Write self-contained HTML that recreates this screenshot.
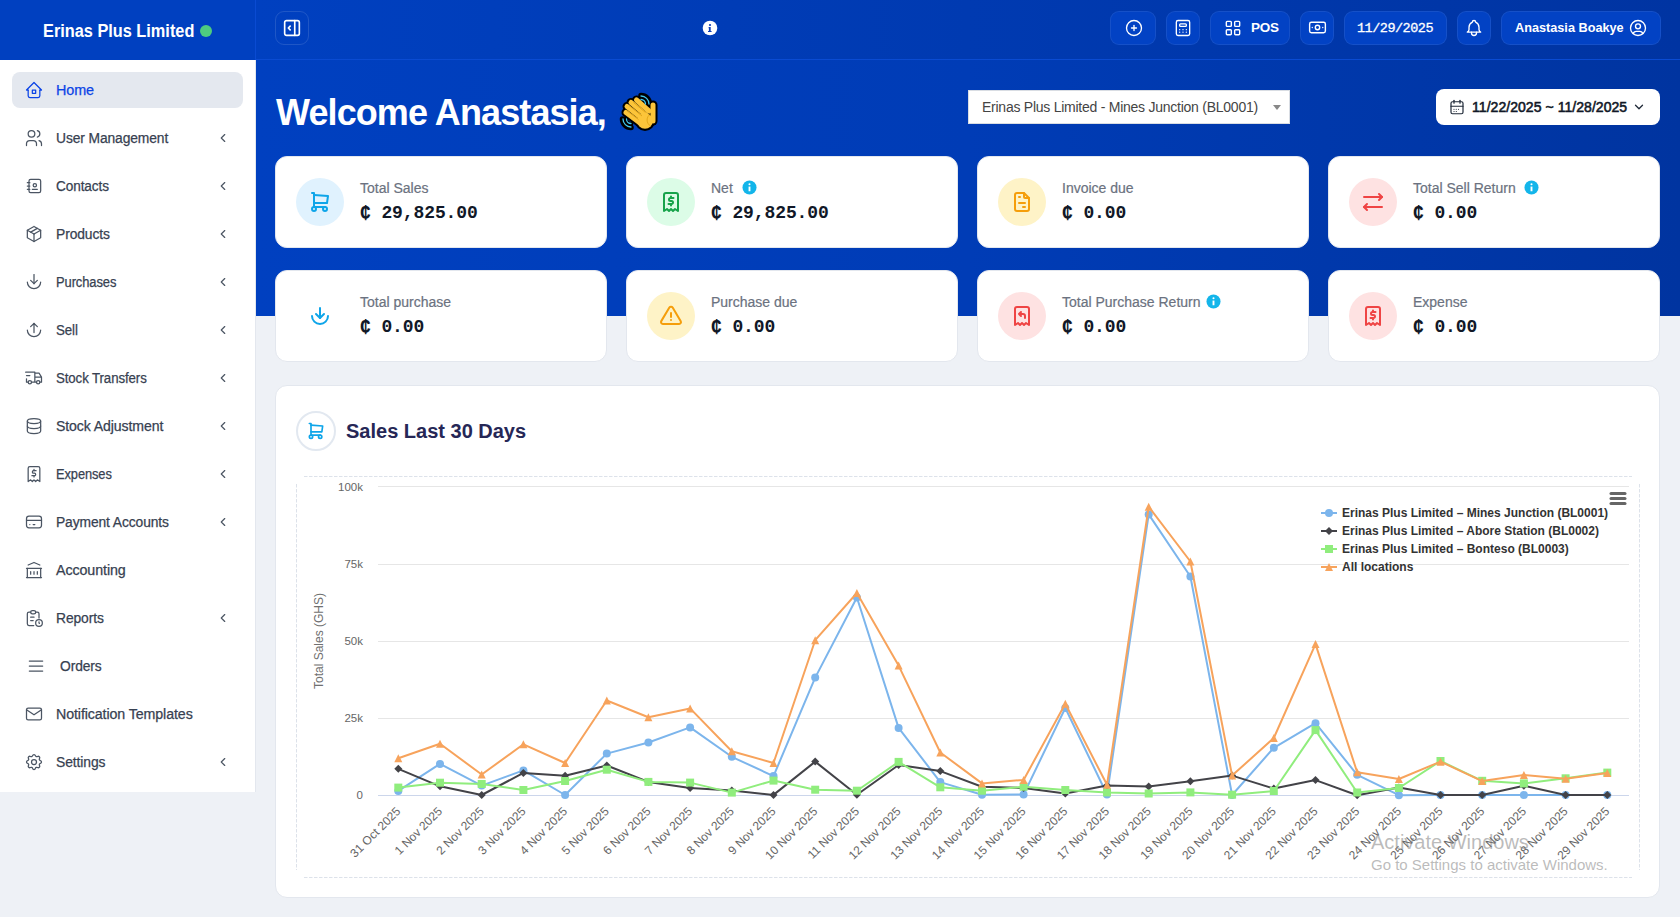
<!DOCTYPE html><html><head><meta charset="utf-8"><style>
*{box-sizing:border-box;margin:0;padding:0}
html,body{width:1680px;height:917px;overflow:hidden}
body{background:#eef1f6;font-family:"Liberation Sans",sans-serif;position:relative;color:#374151}
.a{position:absolute}
svg.i{position:absolute;fill:none;stroke-linecap:round;stroke-linejoin:round}
#sb{left:0;top:0;width:256px;height:792px;background:#fff;border-right:1px solid #e3e7ee}
#brand{left:0;top:0;width:256px;height:60px;background:#0040c0;border-right:1px solid #0a4bd2}
#brand .t{position:absolute;left:43px;top:19px;font-weight:bold;font-size:18px;color:#fff;white-space:nowrap;line-height:24px;transform:scaleX(0.906);transform-origin:0 0}
#brand .dot{position:absolute;left:200px;top:25px;width:12px;height:12px;border-radius:50%;background:#4ecb7f}
.mi{position:absolute;left:12px;width:231px;height:36px;border-radius:8px}
.mi.act{background:#e4e8ef}
.mi svg{position:absolute;left:12px;top:8px;width:20px;height:20px;fill:none;stroke:#4b5563;stroke-width:1.5;stroke-linecap:round;stroke-linejoin:round}
.mi .l{position:absolute;left:44px;top:0;line-height:36px;font-size:14px;color:#374151;white-space:nowrap;letter-spacing:-0.1px;-webkit-text-stroke:0.25px #374151}
.mi.act .l{color:#0b44e6;-webkit-text-stroke:0.25px #0b44e6}
.mi.act svg{stroke:#0b44e6}
.mi svg.ch{left:204px;top:11px;width:14px;height:14px;stroke-width:2}
#top{left:256px;top:0;width:1424px;height:60px;background:linear-gradient(90deg,#0040c0 0%,#0034a2 100%);border-bottom:1px solid #0a4bd2}
#hero{left:256px;top:60px;width:1424px;height:256px;background:linear-gradient(90deg,#0040c0 0%,#003cb6 50%,#0034a0 100%)}
.tb{position:absolute;top:11px;height:34px;border-radius:9px;background:#0242c4;border:1px solid rgba(255,255,255,0.08);color:#fff;font-weight:bold;white-space:nowrap}
.tb svg{position:absolute;fill:none;stroke:#fff;stroke-width:2;stroke-linecap:round;stroke-linejoin:round}
.card{position:absolute;width:332px;height:92px;background:#fff;border-radius:12px;border:1px solid #e3e7ee}
.card .ic{position:absolute;left:20px;top:21px;width:48px;height:48px;border-radius:50%}
.card .ic svg{position:absolute;left:12px;top:12px;width:24px;height:24px;fill:none;stroke-width:2;stroke-linecap:round;stroke-linejoin:round}
.card .lb{position:absolute;left:84px;top:22px;line-height:18px;font-size:14px;color:#6b7280;white-space:nowrap;-webkit-text-stroke:0.2px #6b7280}
.card .lb svg{position:absolute;top:0px;width:16px;height:16px}
.card .v{position:absolute;left:84px;top:43px;line-height:26px;font-family:"Liberation Mono",monospace;font-weight:bold;font-size:18px;color:#111827;white-space:nowrap;letter-spacing:-0.1px}
</style></head><body>
<div id="sb" class="a">
<div class="mi act" style="top:72px"><svg viewBox="0 0 24 24"><path d="M5 12l-2 0l9 -9l9 9l-2 0"/><path d="M5 12v7a2 2 0 0 0 2 2h10a2 2 0 0 0 2 -2v-7"/><path d="M10 12h4v4h-4z"/></svg><span class="l" style="transform:scaleX(1.027);transform-origin:0 0">Home</span>
</div>
<div class="mi" style="top:120px"><svg viewBox="0 0 24 24"><path d="M9 7m-4 0a4 4 0 1 0 8 0a4 4 0 1 0 -8 0"/><path d="M3 21v-2a4 4 0 0 1 4 -4h4a4 4 0 0 1 4 4v2"/><path d="M16 3.13a4 4 0 0 1 0 7.75"/><path d="M21 21v-2a4 4 0 0 0 -3 -3.85"/></svg><span class="l" style="transform:scaleX(0.987);transform-origin:0 0">User Management</span>
<svg class="ch" viewBox="0 0 24 24"><path d="M15 6l-6 6l6 6"/></svg>
</div>
<div class="mi" style="top:168px"><svg viewBox="0 0 24 24"><path d="M20 6v12a2 2 0 0 1 -2 2h-10a2 2 0 0 1 -2 -2v-12a2 2 0 0 1 2 -2h10a2 2 0 0 1 2 2z"/><path d="M10 16h6"/><path d="M13 11m-2 0a2 2 0 1 0 4 0a2 2 0 1 0 -4 0"/><path d="M4 8h3"/><path d="M4 12h3"/><path d="M4 16h3"/></svg><span class="l" style="transform:scaleX(0.972);transform-origin:0 0">Contacts</span>
<svg class="ch" viewBox="0 0 24 24"><path d="M15 6l-6 6l6 6"/></svg>
</div>
<div class="mi" style="top:216px"><svg viewBox="0 0 24 24"><path d="M12 3l8 4.5l0 9l-8 4.5l-8 -4.5l0 -9l8 -4.5"/><path d="M12 12l8 -4.5"/><path d="M12 12l0 9"/><path d="M12 12l-8 -4.5"/><path d="M16 5.25l-8 4.5"/></svg><span class="l" style="transform:scaleX(0.989);transform-origin:0 0">Products</span>
<svg class="ch" viewBox="0 0 24 24"><path d="M15 6l-6 6l6 6"/></svg>
</div>
<div class="mi" style="top:264px"><svg viewBox="0 0 24 24"><path d="M4 12a8 8 0 0 0 16 0"/><path d="M12 3v11"/><path d="M8 10l4 4l4 -4"/></svg><span class="l" style="transform:scaleX(0.925);transform-origin:0 0">Purchases</span>
<svg class="ch" viewBox="0 0 24 24"><path d="M15 6l-6 6l6 6"/></svg>
</div>
<div class="mi" style="top:312px"><svg viewBox="0 0 24 24"><path d="M4 12a8 8 0 0 0 16 0"/><path d="M12 15v-11"/><path d="M8 8l4 -4l4 4"/></svg><span class="l" style="transform:scaleX(0.948);transform-origin:0 0">Sell</span>
<svg class="ch" viewBox="0 0 24 24"><path d="M15 6l-6 6l6 6"/></svg>
</div>
<div class="mi" style="top:360px"><svg viewBox="0 0 24 24"><path d="M7 17m-2 0a2 2 0 1 0 4 0a2 2 0 1 0 -4 0"/><path d="M17 17m-2 0a2 2 0 1 0 4 0a2 2 0 1 0 -4 0"/><path d="M5 17h-2v-4m-1 -8h11v12m-4 0h6m4 0h2v-6h-8m0 -5h5l3 5"/><path d="M3 9l4 0"/></svg><span class="l" style="transform:scaleX(0.947);transform-origin:0 0">Stock Transfers</span>
<svg class="ch" viewBox="0 0 24 24"><path d="M15 6l-6 6l6 6"/></svg>
</div>
<div class="mi" style="top:408px"><svg viewBox="0 0 24 24"><path d="M12 6m-8 0a8 3 0 1 0 16 0a8 3 0 1 0 -16 0"/><path d="M4 6v6a8 3 0 0 0 16 0v-6"/><path d="M4 12v6a8 3 0 0 0 16 0v-6"/></svg><span class="l" style="transform:scaleX(1.006);transform-origin:0 0">Stock Adjustment</span>
<svg class="ch" viewBox="0 0 24 24"><path d="M15 6l-6 6l6 6"/></svg>
</div>
<div class="mi" style="top:456px"><svg viewBox="0 0 24 24"><path d="M5 21v-16a2 2 0 0 1 2 -2h10a2 2 0 0 1 2 2v16l-3 -2l-2 2l-2 -2l-2 2l-2 -2l-3 2"/><path d="M14.5 8h-3a1.5 1.5 0 0 0 0 3h1a1.5 1.5 0 0 1 0 3h-3"/><path d="M12 6.5v1.5m0 6v1.5"/></svg><span class="l" style="transform:scaleX(0.919);transform-origin:0 0">Expenses</span>
<svg class="ch" viewBox="0 0 24 24"><path d="M15 6l-6 6l6 6"/></svg>
</div>
<div class="mi" style="top:504px"><svg viewBox="0 0 24 24"><path d="M3 8a3 3 0 0 1 3 -3h12a3 3 0 0 1 3 3v8a3 3 0 0 1 -3 3h-12a3 3 0 0 1 -3 -3z"/><path d="M3 10l18 0"/><path d="M7 15l.01 0"/><path d="M11 15l2 0"/></svg><span class="l" style="transform:scaleX(0.987);transform-origin:0 0">Payment Accounts</span>
<svg class="ch" viewBox="0 0 24 24"><path d="M15 6l-6 6l6 6"/></svg>
</div>
<div class="mi" style="top:552px"><svg viewBox="0 0 24 24"><path d="M3 21l18 0"/><path d="M3 10l18 0"/><path d="M5 6l7 -3l7 3"/><path d="M4 10l0 11"/><path d="M20 10l0 11"/><path d="M8 14l0 3"/><path d="M12 14l0 3"/><path d="M16 14l0 3"/></svg><span class="l" style="transform:scaleX(1.02);transform-origin:0 0">Accounting</span>
</div>
<div class="mi" style="top:600px"><svg viewBox="0 0 24 24"><path d="M8 5h-2a2 2 0 0 0 -2 2v12a2 2 0 0 0 2 2h5.697"/><path d="M18 12v-5a2 2 0 0 0 -2 -2h-2"/><path d="M8 3m0 2a2 2 0 0 1 2 -2h2a2 2 0 0 1 2 2v0a2 2 0 0 1 -2 2h-2a2 2 0 0 1 -2 -2z"/><path d="M18 18m-4 0a4 4 0 1 0 8 0a4 4 0 1 0 -8 0"/><path d="M18 16.5v1.5l.5 .5"/><path d="M8 11h4"/><path d="M8 15h3"/></svg><span class="l" style="transform:scaleX(0.988);transform-origin:0 0">Reports</span>
<svg class="ch" viewBox="0 0 24 24"><path d="M15 6l-6 6l6 6"/></svg>
</div>
<div class="mi" style="top:648px"><svg viewBox="0 0 24 24" style="left:14px"><path d="M4 6l16 0"/><path d="M4 12l16 0"/><path d="M4 18l16 0"/></svg><span class="l" style="left:48px;transform:scaleX(0.986);transform-origin:0 0">Orders</span>
</div>
<div class="mi" style="top:696px"><svg viewBox="0 0 24 24"><path d="M3 7a2 2 0 0 1 2 -2h14a2 2 0 0 1 2 2v10a2 2 0 0 1 -2 2h-14a2 2 0 0 1 -2 -2v-10z"/><path d="M3 7l9 6l9 -6"/></svg><span class="l" style="transform:scaleX(1.016);transform-origin:0 0">Notification Templates</span>
</div>
<div class="mi" style="top:744px"><svg viewBox="0 0 24 24"><path d="M10.325 4.317c.426 -1.756 2.924 -1.756 3.35 0a1.724 1.724 0 0 0 2.573 1.066c1.543 -.94 3.31 .826 2.37 2.37a1.724 1.724 0 0 0 1.065 2.572c1.756 .426 1.756 2.924 0 3.35a1.724 1.724 0 0 0 -1.066 2.573c.94 1.543 -.826 3.31 -2.37 2.37a1.724 1.724 0 0 0 -2.572 1.065c-.426 1.756 -2.924 1.756 -3.35 0a1.724 1.724 0 0 0 -2.573 -1.066c-1.543 .94 -3.31 -.826 -2.37 -2.37a1.724 1.724 0 0 0 -1.065 -2.572c-1.756 -.426 -1.756 -2.924 0 -3.35a1.724 1.724 0 0 0 1.066 -2.573c-.94 -1.543 .826 -3.31 2.37 -2.37c1 .608 2.296 .07 2.572 -1.065z"/><path d="M9 12a3 3 0 1 0 6 0a3 3 0 0 0 -6 0"/></svg><span class="l" style="transform:scaleX(0.992);transform-origin:0 0">Settings</span>
<svg class="ch" viewBox="0 0 24 24"><path d="M15 6l-6 6l6 6"/></svg>
</div>
</div>
<div id="brand" class="a"><span class="t">Erinas Plus Limited</span><span class="dot"></span></div>
<div id="top" class="a"></div>
<div id="hero" class="a"></div>
<div class="a" style="left:275px;top:11px;width:34px;height:34px;border-radius:9px;border:1px solid rgba(255,255,255,0.12)"></div>
<svg class="i" style="left:281px;top:17px;width:22px;height:22px;stroke:#fff;stroke-width:1.8" viewBox="0 0 24 24"><path d="M4 6a2 2 0 0 1 2 -2h12a2 2 0 0 1 2 2v12a2 2 0 0 1 -2 2h-12a2 2 0 0 1 -2 -2z"/><path d="M15 4v16"/><path d="M10 10l-2 2l2 2"/></svg>
<svg class="i" style="left:701.5px;top:20px;width:16px;height:16px" viewBox="0 0 16 16"><circle cx="8" cy="8" r="7.3" fill="#fff"/><circle cx="8" cy="5" r="1.1" fill="#0a3cb8"/><path d="M6.6 7.1h2.1v3.9h0.9v1.1h-3.6v-1.1h0.9v-2.8h-0.3z" fill="#0a3cb8"/></svg>
<div class="tb" style="left:1110px;width:46px"><svg style="left:13px;top:6px;width:20px;height:20px;stroke-width:1.6" viewBox="0 0 24 24"><path d="M12 12m-9 0a9 9 0 1 0 18 0a9 9 0 1 0 -18 0"/><path d="M9 12h6"/><path d="M12 9v6"/></svg></div>
<div class="tb" style="left:1166px;width:34px"><svg style="left:6px;top:6px;width:20px;height:20px;stroke-width:1.6" viewBox="0 0 24 24"><path d="M4 3m0 2a2 2 0 0 1 2 -2h12a2 2 0 0 1 2 2v14a2 2 0 0 1 -2 2h-12a2 2 0 0 1 -2 -2z"/><path d="M8 7m0 1a1 1 0 0 1 1 -1h6a1 1 0 0 1 1 1v1a1 1 0 0 1 -1 1h-6a1 1 0 0 1 -1 -1z"/><path d="M8 14l0 .01"/><path d="M12 14l0 .01"/><path d="M16 14l0 .01"/><path d="M8 17l0 .01"/><path d="M12 17l0 .01"/><path d="M16 17l0 .01"/></svg></div>
<div class="tb" style="left:1210px;width:80px"><svg style="left:12px;top:6px;width:20px;height:20px;stroke-width:1.7" viewBox="0 0 24 24"><path d="M4 5a1 1 0 0 1 1 -1h4a1 1 0 0 1 1 1v4a1 1 0 0 1 -1 1h-4a1 1 0 0 1 -1 -1z"/><path d="M14 5a1 1 0 0 1 1 -1h4a1 1 0 0 1 1 1v4a1 1 0 0 1 -1 1h-4a1 1 0 0 1 -1 -1z"/><path d="M4 15a1 1 0 0 1 1 -1h4a1 1 0 0 1 1 1v4a1 1 0 0 1 -1 1h-4a1 1 0 0 1 -1 -1z"/><path d="M14 15a1 1 0 0 1 1 -1h4a1 1 0 0 1 1 1v4a1 1 0 0 1 -1 1h-4a1 1 0 0 1 -1 -1z"/></svg><span class="a" style="left:40px;top:0;line-height:32px;font-size:13.5px;letter-spacing:-0.3px">POS</span></div>
<div class="tb" style="left:1300px;width:34px"><svg style="left:6px;top:5px;width:21px;height:21px;stroke-width:1.6" viewBox="0 0 24 24"><path d="M3 8a2 2 0 0 1 2 -2h14a2 2 0 0 1 2 2v8a2 2 0 0 1 -2 2h-14a2 2 0 0 1 -2 -2z"/><path d="M12 12m-2.5 0a2.5 2.5 0 1 0 5 0a2.5 2.5 0 1 0 -5 0"/><path d="M6 12l.01 0"/><path d="M18 12l.01 0"/></svg></div>
<div class="tb" style="left:1344px;width:103px;font-weight:normal"><span class="a" style="left:12px;top:1px;line-height:32px;font-family:'Liberation Mono',monospace;font-size:13.5px;letter-spacing:-0.5px;-webkit-text-stroke:0.3px #fff">11/29/2025</span></div>
<div class="tb" style="left:1457px;width:34px"><svg style="left:6px;top:6px;width:20px;height:20px;stroke-width:1.6" viewBox="0 0 24 24"><path d="M10 5a2 2 0 1 1 4 0a7 7 0 0 1 4 6v3a4 4 0 0 0 2 3h-16a4 4 0 0 0 2 -3v-3a7 7 0 0 1 4 -6"/><path d="M9 17v1a3 3 0 0 0 6 0v-1"/></svg></div>
<div class="tb" style="left:1501px;width:160px"><span class="a" style="left:13px;top:0;line-height:32px;font-size:13.5px;transform:scaleX(0.94);transform-origin:0 0">Anastasia Boakye</span><svg style="left:126px;top:6px;width:20px;height:20px;stroke-width:1.6" viewBox="0 0 24 24"><path d="M12 12m-9 0a9 9 0 1 0 18 0a9 9 0 1 0 -18 0"/><path d="M12 10m-3 0a3 3 0 1 0 6 0a3 3 0 1 0 -6 0"/><path d="M6.168 18.849a4 4 0 0 1 3.832 -2.849h4a4 4 0 0 1 3.834 2.855"/></svg></div>
<div class="a" style="left:276px;top:90px;font-weight:bold;font-size:36px;line-height:46px;color:#fff;letter-spacing:-0.9px;white-space:nowrap">Welcome Anastasia,</div>
<svg class="a" style="left:619px;top:92px;width:40px;height:40px" viewBox="0 0 40 40">
<g stroke="#000" stroke-linecap="round" fill="none">
<path d="M17.5 8L30 19" stroke-width="9"/><path d="M12 10.5L27 23" stroke-width="9"/><path d="M8 14.5L24 27" stroke-width="9"/><path d="M7 20.5L21 31" stroke-width="9"/>
<path d="M34 13L34 29" stroke-width="9"/><circle cx="26" cy="29" r="10" fill="#000" stroke="none"/>
<path d="M22 3.5a8.5 8.5 0 0 1 8.5 8.5" stroke-width="5.5"/><path d="M3.5 27a8.5 8.5 0 0 0 8.5 8.5" stroke-width="5.5"/>
<path d="M22 7a5 5 0 0 1 5 5" stroke-width="4.5"/><path d="M7 27a5 5 0 0 0 5 5" stroke-width="4.5"/>
</g>
<g stroke="#fcc53a" stroke-linecap="round" fill="none">
<path d="M17.5 8L30 19" stroke-width="5"/><path d="M12 10.5L27 23" stroke-width="5"/><path d="M8 14.5L24 27" stroke-width="5"/><path d="M7 20.5L21 31" stroke-width="5"/>
<path d="M34 13L34 29" stroke-width="5"/><circle cx="26" cy="29" r="7.8" fill="#fcc53a" stroke="none"/>
</g>
<g stroke="#d99a0a" stroke-width="0.7" fill="none"><path d="M14.5 10.5l12 10"/><path d="M10 13.5l13 10.5"/><path d="M7.5 18.5l12 9"/><path d="M31.5 22a7 7 0 0 0 0 12"/></g>
<g stroke="#42c8f0" stroke-width="1.3" fill="none" stroke-linecap="round"><path d="M22 4a8 8 0 0 1 8 8"/><path d="M22 7.5a4.5 4.5 0 0 1 4.5 4.5"/><path d="M4 27a8 8 0 0 0 8 8"/><path d="M7.5 27a4.5 4.5 0 0 0 4.5 4.5"/></g>
</svg>
<div class="a" style="left:968px;top:90px;width:322px;height:34px;background:#fff;border:1px solid #d9dde3"><span class="a" style="left:13px;top:0;line-height:32px;font-size:14px;color:#444;white-space:nowrap;letter-spacing:-0.25px">Erinas Plus Limited - Mines Junction (BL0001)</span><div class="a" style="left:304px;top:14px;width:0;height:0;border-left:4px solid transparent;border-right:4px solid transparent;border-top:5px solid #888"></div></div>
<div class="a" style="left:1436px;top:89px;width:224px;height:36px;background:#fff;border-radius:8px"><svg class="i" style="left:12px;top:9px;width:18px;height:18px;stroke:#1f2937;stroke-width:1.6" viewBox="0 0 24 24"><path d="M4 7a2 2 0 0 1 2 -2h12a2 2 0 0 1 2 2v12a2 2 0 0 1 -2 2h-12a2 2 0 0 1 -2 -2v-12z"/><path d="M16 3v4"/><path d="M8 3v4"/><path d="M4 11h16"/><path d="M8 15h.01m3 0h.01m3 0h.01m-6 3h.01m3 0h.01"/></svg><span class="a" style="left:36px;top:0;line-height:36px;font-size:14px;font-weight:normal;-webkit-text-stroke:0.55px #111827;color:#111827;white-space:nowrap;letter-spacing:0.05px">11/22/2025 ~ 11/28/2025</span><svg class="i" style="left:196px;top:11px;width:14px;height:14px;stroke:#1f2937;stroke-width:2.2" viewBox="0 0 24 24"><path d="M6 9l6 6l6 -6"/></svg></div>
<div class="card" style="left:275px;top:156px"><div class="ic" style="background:#e0f2fe"><svg viewBox="0 0 24 24" style="stroke:#0ea5e9"><path d="M6 19m-2 0a2 2 0 1 0 4 0a2 2 0 1 0 -4 0"/><path d="M17 19m-2 0a2 2 0 1 0 4 0a2 2 0 1 0 -4 0"/><path d="M17 17h-11v-14h-2"/><path d="M6 5l14 1l-1 7h-13"/></svg></div><div class="lb">Total Sales</div><div class="v">₵ 29,825.00</div>
</div>
<div class="card" style="left:626px;top:156px"><div class="ic" style="background:#dcfce7"><svg viewBox="0 0 24 24" style="stroke:#16a34a"><path d="M5 21v-16a2 2 0 0 1 2 -2h10a2 2 0 0 1 2 2v16l-3 -2l-2 2l-2 -2l-2 2l-2 -2l-3 2"/><path d="M14.5 8h-3a1.5 1.5 0 0 0 0 3h1a1.5 1.5 0 0 1 0 3h-3"/><path d="M12 6.5v1.5m0 6v1.5"/></svg></div><div class="lb">Net</div><div class="v">₵ 29,825.00</div>
<svg class="i" style="left:115px;top:23px;width:15px;height:15px" viewBox="0 0 16 16"><circle cx="8" cy="8" r="7.5" fill="#13b5ea"/><rect x="7" y="7" width="2" height="5" fill="#fff"/><circle cx="8" cy="4.6" r="1.1" fill="#fff"/></svg>
</div>
<div class="card" style="left:977px;top:156px"><div class="ic" style="background:#fef3c7"><svg viewBox="0 0 24 24" style="stroke:#f59e0b"><path d="M14 3v4a1 1 0 0 0 1 1h4"/><path d="M17 21h-10a2 2 0 0 1 -2 -2v-14a2 2 0 0 1 2 -2h7l5 5v11a2 2 0 0 1 -2 2z"/><path d="M9 7l1 0"/><path d="M9 13l6 0"/><path d="M13 17l2 0"/></svg></div><div class="lb">Invoice due</div><div class="v">₵ 0.00</div>
</div>
<div class="card" style="left:1328px;top:156px"><div class="ic" style="background:#fee2e2"><svg viewBox="0 0 24 24" style="stroke:#ef4444"><path d="M21 7l-18 0"/><path d="M18 10l3 -3l-3 -3"/><path d="M6 20l-3 -3l3 -3"/><path d="M3 17l18 0"/></svg></div><div class="lb">Total Sell Return</div><div class="v">₵ 0.00</div>
<svg class="i" style="left:195px;top:23px;width:15px;height:15px" viewBox="0 0 16 16"><circle cx="8" cy="8" r="7.5" fill="#13b5ea"/><rect x="7" y="7" width="2" height="5" fill="#fff"/><circle cx="8" cy="4.6" r="1.1" fill="#fff"/></svg>
</div>
<div class="card" style="left:275px;top:270px"><div class="ic" style="background:transparent"><svg viewBox="0 0 24 24" style="stroke:#0ea5e9"><path d="M4 12a8 8 0 0 0 16 0"/><path d="M12 4v10"/><path d="M8 10l4 4l4 -4"/></svg></div><div class="lb">Total purchase</div><div class="v">₵ 0.00</div>
</div>
<div class="card" style="left:626px;top:270px"><div class="ic" style="background:#fef3c7"><svg viewBox="0 0 24 24" style="stroke:#f59e0b"><path d="M12 9v4"/><path d="M10.363 3.591l-8.106 13.534a1.914 1.914 0 0 0 1.636 2.871h16.214a1.914 1.914 0 0 0 1.636 -2.87l-8.106 -13.536a1.914 1.914 0 0 0 -3.274 0z"/><path d="M12 16h.01"/></svg></div><div class="lb">Purchase due</div><div class="v">₵ 0.00</div>
</div>
<div class="card" style="left:977px;top:270px"><div class="ic" style="background:#fee2e2"><svg viewBox="0 0 24 24" style="stroke:#ef4444"><path d="M5 21v-16a2 2 0 0 1 2 -2h10a2 2 0 0 1 2 2v16l-3 -2l-2 2l-2 -2l-2 2l-2 -2l-3 2"/><path d="M15 14v-2a2 2 0 0 0 -2 -2h-4l2 -2m0 4l-2 -2"/></svg></div><div class="lb">Total Purchase Return</div><div class="v">₵ 0.00</div>
<svg class="i" style="left:228px;top:23px;width:15px;height:15px" viewBox="0 0 16 16"><circle cx="8" cy="8" r="7.5" fill="#13b5ea"/><rect x="7" y="7" width="2" height="5" fill="#fff"/><circle cx="8" cy="4.6" r="1.1" fill="#fff"/></svg>
</div>
<div class="card" style="left:1328px;top:270px"><div class="ic" style="background:#fee2e2"><svg viewBox="0 0 24 24" style="stroke:#ef4444"><path d="M5 21v-16a2 2 0 0 1 2 -2h10a2 2 0 0 1 2 2v16l-3 -2l-2 2l-2 -2l-2 2l-2 -2l-3 2"/><path d="M14.5 8h-3a1.5 1.5 0 0 0 0 3h1a1.5 1.5 0 0 1 0 3h-3"/><path d="M12 6.5v1.5m0 6v1.5"/></svg></div><div class="lb">Expense</div><div class="v">₵ 0.00</div>
</div>
<div class="a" style="left:275px;top:385px;width:1385px;height:513px;background:#fff;border-radius:12px;border:1px solid #e3e7ee"></div>
<div class="a" style="left:296px;top:411px;width:40px;height:40px;border-radius:50%;border:2px solid #e2e8f0"></div>
<svg class="i" style="left:306px;top:421px;width:20px;height:20px;stroke:#0ea5e9;stroke-width:2" viewBox="0 0 24 24"><path d="M6 19m-2 0a2 2 0 1 0 4 0a2 2 0 1 0 -4 0"/><path d="M17 19m-2 0a2 2 0 1 0 4 0a2 2 0 1 0 -4 0"/><path d="M17 17h-11v-14h-2"/><path d="M6 5l14 1l-1 7h-13"/></svg>
<div class="a" style="left:346px;top:419px;font-weight:bold;font-size:20px;line-height:24px;color:#262756;white-space:nowrap">Sales Last 30 Days</div>
<svg class="a" style="left:0;top:0;width:1680px;height:917px;overflow:visible" viewBox="0 0 1680 917">
<g stroke="#dde2ea" stroke-width="1" stroke-dasharray="3.5,1.5"><path d="M304 476.5H1632"/><path d="M304 877.5H1632"/><path d="M296.5 484V870"/><path d="M1639.5 484V870"/></g>
<path d="M378 486.5H1629" stroke="#e6e6e6" stroke-width="1"/>
<path d="M378 564.5H1629" stroke="#e6e6e6" stroke-width="1"/>
<path d="M378 641.5H1629" stroke="#e6e6e6" stroke-width="1"/>
<path d="M378 718.5H1629" stroke="#e6e6e6" stroke-width="1"/>
<path d="M378 795.5H1629" stroke="#ccd6eb" stroke-width="1"/>
<g font-family="Liberation Sans" font-size="11.5" fill="#666" text-anchor="end">
<text x="363" y="491">100k</text>
<text x="363" y="568">75k</text>
<text x="363" y="645">50k</text>
<text x="363" y="722">25k</text>
<text x="363" y="799">0</text>
</g>
<text x="0" y="0" transform="translate(323 641) rotate(-90)" font-family="Liberation Sans" font-size="12" fill="#707070" text-anchor="middle">Total Sales (GHS)</text>
<g font-family="Liberation Sans" font-size="12" fill="#666" text-anchor="end">
<text transform="translate(401.3 812) rotate(-45)">31 Oct 2025</text>
<text transform="translate(443.0 812) rotate(-45)">1 Nov 2025</text>
<text transform="translate(484.7 812) rotate(-45)">2 Nov 2025</text>
<text transform="translate(526.4 812) rotate(-45)">3 Nov 2025</text>
<text transform="translate(568.1 812) rotate(-45)">4 Nov 2025</text>
<text transform="translate(609.8 812) rotate(-45)">5 Nov 2025</text>
<text transform="translate(651.4 812) rotate(-45)">6 Nov 2025</text>
<text transform="translate(693.1 812) rotate(-45)">7 Nov 2025</text>
<text transform="translate(734.8 812) rotate(-45)">8 Nov 2025</text>
<text transform="translate(776.5 812) rotate(-45)">9 Nov 2025</text>
<text transform="translate(818.2 812) rotate(-45)">10 Nov 2025</text>
<text transform="translate(859.9 812) rotate(-45)">11 Nov 2025</text>
<text transform="translate(901.6 812) rotate(-45)">12 Nov 2025</text>
<text transform="translate(943.3 812) rotate(-45)">13 Nov 2025</text>
<text transform="translate(985.0 812) rotate(-45)">14 Nov 2025</text>
<text transform="translate(1026.6 812) rotate(-45)">15 Nov 2025</text>
<text transform="translate(1068.3 812) rotate(-45)">16 Nov 2025</text>
<text transform="translate(1110.0 812) rotate(-45)">17 Nov 2025</text>
<text transform="translate(1151.7 812) rotate(-45)">18 Nov 2025</text>
<text transform="translate(1193.4 812) rotate(-45)">19 Nov 2025</text>
<text transform="translate(1235.1 812) rotate(-45)">20 Nov 2025</text>
<text transform="translate(1276.8 812) rotate(-45)">21 Nov 2025</text>
<text transform="translate(1318.5 812) rotate(-45)">22 Nov 2025</text>
<text transform="translate(1360.2 812) rotate(-45)">23 Nov 2025</text>
<text transform="translate(1401.9 812) rotate(-45)">24 Nov 2025</text>
<text transform="translate(1443.5 812) rotate(-45)">25 Nov 2025</text>
<text transform="translate(1485.2 812) rotate(-45)">26 Nov 2025</text>
<text transform="translate(1526.9 812) rotate(-45)">27 Nov 2025</text>
<text transform="translate(1568.6 812) rotate(-45)">28 Nov 2025</text>
<text transform="translate(1610.3 812) rotate(-45)">29 Nov 2025</text>
</g>
<polyline points="398.3,790.9 440.0,763.9 481.7,785.6 523.4,770.4 565.1,795 606.8,753.6 648.4,742.5 690.1,727.4 731.8,756.8 773.5,776.1 815.2,677.6 856.9,597.5 898.6,727.9 940.3,782.1 982.0,794.7 1023.6,794.6 1065.3,708 1107.0,794.5 1148.7,514.4 1190.4,576.5 1232.1,795 1273.8,747.8 1315.5,723.2 1357.2,774.8 1398.9,795.2 1440.5,795 1482.2,795 1523.9,795 1565.6,795 1607.3,795" fill="none" stroke="#7cb5ec" stroke-width="2" stroke-linejoin="round"/>
<circle cx="398.3" cy="790.9" r="4" fill="#7cb5ec"/>
<circle cx="440.0" cy="763.9" r="4" fill="#7cb5ec"/>
<circle cx="481.7" cy="785.6" r="4" fill="#7cb5ec"/>
<circle cx="523.4" cy="770.4" r="4" fill="#7cb5ec"/>
<circle cx="565.1" cy="795" r="4" fill="#7cb5ec"/>
<circle cx="606.8" cy="753.6" r="4" fill="#7cb5ec"/>
<circle cx="648.4" cy="742.5" r="4" fill="#7cb5ec"/>
<circle cx="690.1" cy="727.4" r="4" fill="#7cb5ec"/>
<circle cx="731.8" cy="756.8" r="4" fill="#7cb5ec"/>
<circle cx="773.5" cy="776.1" r="4" fill="#7cb5ec"/>
<circle cx="815.2" cy="677.6" r="4" fill="#7cb5ec"/>
<circle cx="856.9" cy="597.5" r="4" fill="#7cb5ec"/>
<circle cx="898.6" cy="727.9" r="4" fill="#7cb5ec"/>
<circle cx="940.3" cy="782.1" r="4" fill="#7cb5ec"/>
<circle cx="982.0" cy="794.7" r="4" fill="#7cb5ec"/>
<circle cx="1023.6" cy="794.6" r="4" fill="#7cb5ec"/>
<circle cx="1065.3" cy="708" r="4" fill="#7cb5ec"/>
<circle cx="1107.0" cy="794.5" r="4" fill="#7cb5ec"/>
<circle cx="1148.7" cy="514.4" r="4" fill="#7cb5ec"/>
<circle cx="1190.4" cy="576.5" r="4" fill="#7cb5ec"/>
<circle cx="1232.1" cy="795" r="4" fill="#7cb5ec"/>
<circle cx="1273.8" cy="747.8" r="4" fill="#7cb5ec"/>
<circle cx="1315.5" cy="723.2" r="4" fill="#7cb5ec"/>
<circle cx="1357.2" cy="774.8" r="4" fill="#7cb5ec"/>
<circle cx="1398.9" cy="795.2" r="4" fill="#7cb5ec"/>
<circle cx="1440.5" cy="795" r="4" fill="#7cb5ec"/>
<circle cx="1482.2" cy="795" r="4" fill="#7cb5ec"/>
<circle cx="1523.9" cy="795" r="4" fill="#7cb5ec"/>
<circle cx="1565.6" cy="795" r="4" fill="#7cb5ec"/>
<circle cx="1607.3" cy="795" r="4" fill="#7cb5ec"/>
<polyline points="398.3,768.8 440.0,786.3 481.7,795 523.4,772.9 565.1,775.8 606.8,765.5 648.4,781.9 690.1,788.1 731.8,790.6 773.5,794.9 815.2,761.6 856.9,794.7 898.6,765 940.3,771.1 982.0,786.8 1023.6,788 1065.3,793.5 1107.0,785.5 1148.7,786.5 1190.4,781.3 1232.1,775.6 1273.8,788.6 1315.5,780.1 1357.2,795.3 1398.9,787.5 1440.5,795 1482.2,795 1523.9,785.7 1565.6,795 1607.3,795" fill="none" stroke="#434348" stroke-width="2" stroke-linejoin="round"/>
<path d="M398.3 764.8L402.3 768.8L398.3 772.8L394.3 768.8Z" fill="#434348"/>
<path d="M440.0 782.3L444.0 786.3L440.0 790.3L436.0 786.3Z" fill="#434348"/>
<path d="M481.7 791L485.7 795L481.7 799L477.7 795Z" fill="#434348"/>
<path d="M523.4 768.9L527.4 772.9L523.4 776.9L519.4 772.9Z" fill="#434348"/>
<path d="M565.1 771.8L569.1 775.8L565.1 779.8L561.1 775.8Z" fill="#434348"/>
<path d="M606.8 761.5L610.8 765.5L606.8 769.5L602.8 765.5Z" fill="#434348"/>
<path d="M648.4 777.9L652.4 781.9L648.4 785.9L644.4 781.9Z" fill="#434348"/>
<path d="M690.1 784.1L694.1 788.1L690.1 792.1L686.1 788.1Z" fill="#434348"/>
<path d="M731.8 786.6L735.8 790.6L731.8 794.6L727.8 790.6Z" fill="#434348"/>
<path d="M773.5 790.9L777.5 794.9L773.5 798.9L769.5 794.9Z" fill="#434348"/>
<path d="M815.2 757.6L819.2 761.6L815.2 765.6L811.2 761.6Z" fill="#434348"/>
<path d="M856.9 790.7L860.9 794.7L856.9 798.7L852.9 794.7Z" fill="#434348"/>
<path d="M898.6 761L902.6 765L898.6 769L894.6 765Z" fill="#434348"/>
<path d="M940.3 767.1L944.3 771.1L940.3 775.1L936.3 771.1Z" fill="#434348"/>
<path d="M982.0 782.8L986.0 786.8L982.0 790.8L978.0 786.8Z" fill="#434348"/>
<path d="M1023.6 784L1027.6 788L1023.6 792L1019.6 788Z" fill="#434348"/>
<path d="M1065.3 789.5L1069.3 793.5L1065.3 797.5L1061.3 793.5Z" fill="#434348"/>
<path d="M1107.0 781.5L1111.0 785.5L1107.0 789.5L1103.0 785.5Z" fill="#434348"/>
<path d="M1148.7 782.5L1152.7 786.5L1148.7 790.5L1144.7 786.5Z" fill="#434348"/>
<path d="M1190.4 777.3L1194.4 781.3L1190.4 785.3L1186.4 781.3Z" fill="#434348"/>
<path d="M1232.1 771.6L1236.1 775.6L1232.1 779.6L1228.1 775.6Z" fill="#434348"/>
<path d="M1273.8 784.6L1277.8 788.6L1273.8 792.6L1269.8 788.6Z" fill="#434348"/>
<path d="M1315.5 776.1L1319.5 780.1L1315.5 784.1L1311.5 780.1Z" fill="#434348"/>
<path d="M1357.2 791.3L1361.2 795.3L1357.2 799.3L1353.2 795.3Z" fill="#434348"/>
<path d="M1398.9 783.5L1402.9 787.5L1398.9 791.5L1394.9 787.5Z" fill="#434348"/>
<path d="M1440.5 791L1444.5 795L1440.5 799L1436.5 795Z" fill="#434348"/>
<path d="M1482.2 791L1486.2 795L1482.2 799L1478.2 795Z" fill="#434348"/>
<path d="M1523.9 781.7L1527.9 785.7L1523.9 789.7L1519.9 785.7Z" fill="#434348"/>
<path d="M1565.6 791L1569.6 795L1565.6 799L1561.6 795Z" fill="#434348"/>
<path d="M1607.3 791L1611.3 795L1607.3 799L1603.3 795Z" fill="#434348"/>
<polyline points="398.3,787.6 440.0,782.7 481.7,784 523.4,790 565.1,781 606.8,769.7 648.4,781.9 690.1,782.6 731.8,792.6 773.5,780.6 815.2,789.7 856.9,790.7 898.6,761.9 940.3,787.3 982.0,790.7 1023.6,786.7 1065.3,790 1107.0,792.4 1148.7,793.5 1190.4,792.4 1232.1,794.7 1273.8,791 1315.5,730.1 1357.2,792.5 1398.9,788 1440.5,761 1482.2,780.8 1523.9,783.4 1565.6,778.3 1607.3,772.6" fill="none" stroke="#90ed7d" stroke-width="2" stroke-linejoin="round"/>
<rect x="394.3" y="783.6" width="8" height="8" fill="#90ed7d"/>
<rect x="436.0" y="778.7" width="8" height="8" fill="#90ed7d"/>
<rect x="477.7" y="780" width="8" height="8" fill="#90ed7d"/>
<rect x="519.4" y="786" width="8" height="8" fill="#90ed7d"/>
<rect x="561.1" y="777" width="8" height="8" fill="#90ed7d"/>
<rect x="602.8" y="765.7" width="8" height="8" fill="#90ed7d"/>
<rect x="644.4" y="777.9" width="8" height="8" fill="#90ed7d"/>
<rect x="686.1" y="778.6" width="8" height="8" fill="#90ed7d"/>
<rect x="727.8" y="788.6" width="8" height="8" fill="#90ed7d"/>
<rect x="769.5" y="776.6" width="8" height="8" fill="#90ed7d"/>
<rect x="811.2" y="785.7" width="8" height="8" fill="#90ed7d"/>
<rect x="852.9" y="786.7" width="8" height="8" fill="#90ed7d"/>
<rect x="894.6" y="757.9" width="8" height="8" fill="#90ed7d"/>
<rect x="936.3" y="783.3" width="8" height="8" fill="#90ed7d"/>
<rect x="978.0" y="786.7" width="8" height="8" fill="#90ed7d"/>
<rect x="1019.6" y="782.7" width="8" height="8" fill="#90ed7d"/>
<rect x="1061.3" y="786" width="8" height="8" fill="#90ed7d"/>
<rect x="1103.0" y="788.4" width="8" height="8" fill="#90ed7d"/>
<rect x="1144.7" y="789.5" width="8" height="8" fill="#90ed7d"/>
<rect x="1186.4" y="788.4" width="8" height="8" fill="#90ed7d"/>
<rect x="1228.1" y="790.7" width="8" height="8" fill="#90ed7d"/>
<rect x="1269.8" y="787" width="8" height="8" fill="#90ed7d"/>
<rect x="1311.5" y="726.1" width="8" height="8" fill="#90ed7d"/>
<rect x="1353.2" y="788.5" width="8" height="8" fill="#90ed7d"/>
<rect x="1394.9" y="784" width="8" height="8" fill="#90ed7d"/>
<rect x="1436.5" y="757" width="8" height="8" fill="#90ed7d"/>
<rect x="1478.2" y="776.8" width="8" height="8" fill="#90ed7d"/>
<rect x="1519.9" y="779.4" width="8" height="8" fill="#90ed7d"/>
<rect x="1561.6" y="774.3" width="8" height="8" fill="#90ed7d"/>
<rect x="1603.3" y="768.6" width="8" height="8" fill="#90ed7d"/>
<polyline points="398.3,758.2 440.0,743.8 481.7,774.5 523.4,744.3 565.1,763 606.8,700.5 648.4,717.2 690.1,708.4 731.8,751.3 773.5,763 815.2,640.2 856.9,593 898.6,665.6 940.3,752.5 982.0,783.4 1023.6,779.9 1065.3,703.8 1107.0,784.8 1148.7,506.7 1190.4,561.5 1232.1,775.6 1273.8,738 1315.5,644.1 1357.2,772.3 1398.9,779 1440.5,761.7 1482.2,781.1 1523.9,774.9 1565.6,778.8 1607.3,773" fill="none" stroke="#f7a35c" stroke-width="2" stroke-linejoin="round"/>
<path d="M398.3 754.2L402.3 762.2L394.3 762.2Z" fill="#f7a35c"/>
<path d="M440.0 739.8L444.0 747.8L436.0 747.8Z" fill="#f7a35c"/>
<path d="M481.7 770.5L485.7 778.5L477.7 778.5Z" fill="#f7a35c"/>
<path d="M523.4 740.3L527.4 748.3L519.4 748.3Z" fill="#f7a35c"/>
<path d="M565.1 759L569.1 767L561.1 767Z" fill="#f7a35c"/>
<path d="M606.8 696.5L610.8 704.5L602.8 704.5Z" fill="#f7a35c"/>
<path d="M648.4 713.2L652.4 721.2L644.4 721.2Z" fill="#f7a35c"/>
<path d="M690.1 704.4L694.1 712.4L686.1 712.4Z" fill="#f7a35c"/>
<path d="M731.8 747.3L735.8 755.3L727.8 755.3Z" fill="#f7a35c"/>
<path d="M773.5 759L777.5 767L769.5 767Z" fill="#f7a35c"/>
<path d="M815.2 636.2L819.2 644.2L811.2 644.2Z" fill="#f7a35c"/>
<path d="M856.9 589L860.9 597L852.9 597Z" fill="#f7a35c"/>
<path d="M898.6 661.6L902.6 669.6L894.6 669.6Z" fill="#f7a35c"/>
<path d="M940.3 748.5L944.3 756.5L936.3 756.5Z" fill="#f7a35c"/>
<path d="M982.0 779.4L986.0 787.4L978.0 787.4Z" fill="#f7a35c"/>
<path d="M1023.6 775.9L1027.6 783.9L1019.6 783.9Z" fill="#f7a35c"/>
<path d="M1065.3 699.8L1069.3 707.8L1061.3 707.8Z" fill="#f7a35c"/>
<path d="M1107.0 780.8L1111.0 788.8L1103.0 788.8Z" fill="#f7a35c"/>
<path d="M1148.7 502.7L1152.7 510.7L1144.7 510.7Z" fill="#f7a35c"/>
<path d="M1190.4 557.5L1194.4 565.5L1186.4 565.5Z" fill="#f7a35c"/>
<path d="M1232.1 771.6L1236.1 779.6L1228.1 779.6Z" fill="#f7a35c"/>
<path d="M1273.8 734L1277.8 742L1269.8 742Z" fill="#f7a35c"/>
<path d="M1315.5 640.1L1319.5 648.1L1311.5 648.1Z" fill="#f7a35c"/>
<path d="M1357.2 768.3L1361.2 776.3L1353.2 776.3Z" fill="#f7a35c"/>
<path d="M1398.9 775L1402.9 783L1394.9 783Z" fill="#f7a35c"/>
<path d="M1440.5 757.7L1444.5 765.7L1436.5 765.7Z" fill="#f7a35c"/>
<path d="M1482.2 777.1L1486.2 785.1L1478.2 785.1Z" fill="#f7a35c"/>
<path d="M1523.9 770.9L1527.9 778.9L1519.9 778.9Z" fill="#f7a35c"/>
<path d="M1565.6 774.8L1569.6 782.8L1561.6 782.8Z" fill="#f7a35c"/>
<path d="M1607.3 769L1611.3 777L1603.3 777Z" fill="#f7a35c"/>
<g font-family="Liberation Sans" font-size="12" font-weight="bold" fill="#333">
<path d="M1321 513H1337" stroke="#7cb5ec" stroke-width="2"/>
<circle cx="1329" cy="513" r="4" fill="#7cb5ec"/>
<text x="1342" y="517">Erinas Plus Limited – Mines Junction (BL0001)</text>
<path d="M1321 531H1337" stroke="#434348" stroke-width="2"/>
<path d="M1329 527L1333 531L1329 535L1325 531Z" fill="#434348"/>
<text x="1342" y="535">Erinas Plus Limited – Abore Station (BL0002)</text>
<path d="M1321 549H1337" stroke="#90ed7d" stroke-width="2"/>
<rect x="1325" y="545" width="8" height="8" fill="#90ed7d"/>
<text x="1342" y="553">Erinas Plus Limited – Bonteso (BL0003)</text>
<path d="M1321 567H1337" stroke="#f7a35c" stroke-width="2"/>
<path d="M1329 563L1333 571L1325 571Z" fill="#f7a35c"/>
<text x="1342" y="571">All locations</text>
</g>
<g stroke="#666" stroke-width="3" stroke-linecap="round"><path d="M1611 493.5H1625"/><path d="M1611 498.5H1625"/><path d="M1611 503.5H1625"/></g>
</svg>
<div class="a" style="left:1371px;top:830px;font-size:20px;line-height:24px;color:rgba(120,120,120,0.5);white-space:nowrap">Activate Windows</div>
<div class="a" style="left:1371px;top:856px;font-size:15px;line-height:18px;color:rgba(120,120,120,0.5);white-space:nowrap">Go to Settings to activate Windows.</div>
</body></html>
